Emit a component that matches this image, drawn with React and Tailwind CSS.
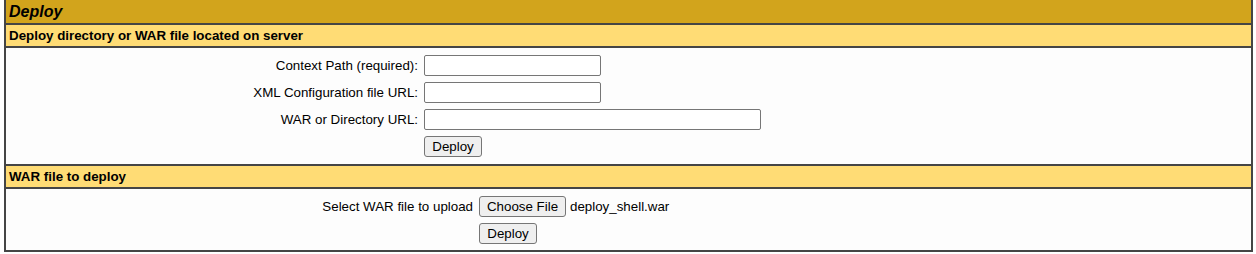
const font = { fontFamily: '"Liberation Sans", Arial, sans-serif' }

function Field({ width }) {
  return (
    <input
      type="text"
      className={`${width} h-[21px] border border-[#767676] rounded-[2px] bg-white px-[2px] text-[13.33px] outline-none`}
    />
  )
}

function Button({ children, width }) {
  return (
    <button
      className={`${width} h-[21px] border border-[#767676] rounded-[3px] bg-[#efefef] text-[13.33px] text-black leading-none`}
    >
      {children}
    </button>
  )
}

function SubHeader({ children }) {
  return (
    <div className="h-[23px] bg-[#ffdc75] border-b-2 border-[#454545] flex items-center pl-[3px] text-[13.33px] font-bold text-black">
      {children}
    </div>
  )
}

export default function App() {
  return (
    <div className="bg-white w-[1256px] h-[254px]" style={font}>
      <div className="ml-[4px] w-[1249px] border-x-2 border-b-2 border-[#454545]">
        <div className="h-[25px] bg-[#d2a41c] border-b-2 border-[#454545] flex items-center pl-[3px] text-[16px] font-bold italic text-black">
          Deploy
        </div>

        <SubHeader>Deploy directory or WAR file located on server</SubHeader>
        <div className="h-[118px] bg-[#fdfdfd] border-b-2 border-[#454545] pt-[4px]">
          <div className="grid grid-cols-[412px_auto] gap-x-[6px] auto-rows-[27px] items-center text-[13.33px] text-black">
            <span className="text-right">Context Path (required):</span>
            <Field width="w-[177px]" />
            <span className="text-right">XML Configuration file URL:</span>
            <Field width="w-[177px]" />
            <span className="text-right">WAR or Directory URL:</span>
            <Field width="w-[337px]" />
            <span />
            <div><Button width="w-[58px]">Deploy</Button></div>
          </div>
        </div>

        <SubHeader>WAR file to deploy</SubHeader>
        <div className="h-[61px] bg-[#fdfdfd] pt-[4px]">
          <div className="grid grid-cols-[467px_auto] gap-x-[6px] auto-rows-[27px] items-center text-[13.33px] text-black">
            <span className="text-right">Select WAR file to upload</span>
            <div className="flex items-center gap-[4px]">
              <Button width="w-[87px]">Choose File</Button>
              <span>deploy_shell.war</span>
            </div>
            <span />
            <div><Button width="w-[58px]">Deploy</Button></div>
          </div>
        </div>
      </div>
    </div>
  )
}
